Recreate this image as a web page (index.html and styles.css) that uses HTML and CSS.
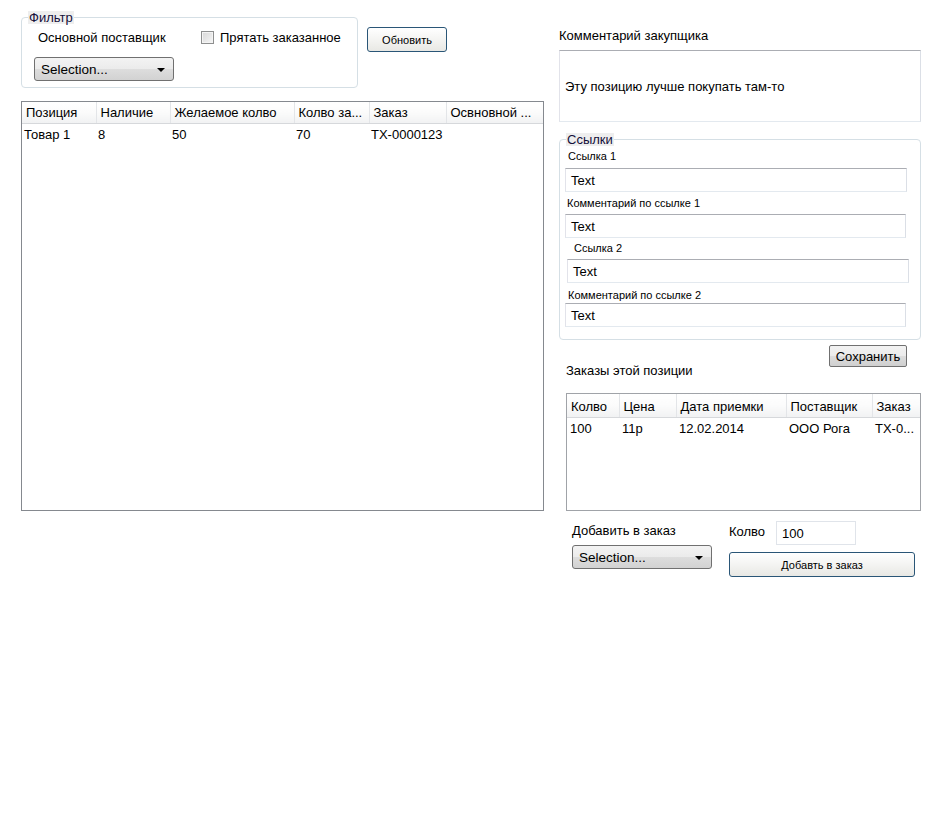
FILE: index.html
```html
<!DOCTYPE html>
<html lang="ru">
<head>
<meta charset="utf-8">
<title>Позиции</title>
<link rel="stylesheet" href="styles.css">
</head>
<body>
<div class="page">
  <div class="left">
    <div class="filter-row">
      <fieldset class="group filter">
        <legend class="group-title">Фильтр</legend>
        <div class="filter-body">
          <div class="filter-line">
            <span class="filter-label">Основной поставщик</span>
            <span class="checkbox"></span>
            <span>Прятать заказанное</span>
          </div>
          <div class="combo filter-combo"><span>Selection...</span><span class="caret"></span></div>
        </div>
      </fieldset>
      <button class="btn-blue refresh">Обновить</button>
    </div>

    <div class="grid main-grid">
      <table>
        <colgroup>
          <col class="c74"><col class="c74"><col class="c124"><col class="c75"><col class="c77"><col>
        </colgroup>
        <thead>
          <tr><th>Позиция</th><th>Наличие</th><th>Желаемое колво</th><th>Колво за...</th><th>Заказ</th><th>Освновной ...</th></tr>
        </thead>
        <tbody>
          <tr><td>Товар 1</td><td>8</td><td>50</td><td>70</td><td>TX-0000123</td><td></td></tr>
        </tbody>
      </table>
    </div>
  </div>

  <div class="right">
    <div class="caption top-caption">Комментарий закупщика</div>
    <div class="memo">Эту позицию лучше покупать там-то</div>

    <fieldset class="group links">
      <legend class="group-title">Ссылки</legend>
      <div class="links-body">
        <div class="small-label">Ссылка 1</div>
        <div class="field f1">Text</div>
        <div class="small-label l2">Комментарий по ссылке 1</div>
        <div class="field f2">Text</div>
        <div class="small-label l3">Ссылка 2</div>
        <div class="field f3">Text</div>
        <div class="small-label l4">Комментарий по ссылке 2</div>
        <div class="field f4">Text</div>
      </div>
    </fieldset>

    <div class="save-row"><button class="btn-gray">Сохранить</button></div>
    <div class="caption orders-caption">Заказы этой позиции</div>

    <div class="grid orders-grid">
      <table>
        <colgroup>
          <col class="c52"><col class="c57"><col class="c110"><col class="c86"><col>
        </colgroup>
        <thead>
          <tr><th>Колво</th><th>Цена</th><th>Дата приемки</th><th>Поставщик</th><th>Заказ</th></tr>
        </thead>
        <tbody>
          <tr><td>100</td><td>11р</td><td>12.02.2014</td><td>ООО Рога</td><td>TX-0...</td></tr>
        </tbody>
      </table>
    </div>

    <div class="add-row">
      <div class="add-left">
        <div class="caption">Добавить в заказ</div>
        <div class="combo add-combo"><span>Selection...</span><span class="caret"></span></div>
      </div>
      <div class="add-right">
        <div class="qty-line">
          <span class="qty-label">Колво</span>
          <div class="field qty">100</div>
        </div>
        <button class="btn-blue add-btn">Добавть в заказ</button>
      </div>
    </div>
  </div>
</div>
</body>
</html>
```

FILE: styles.css
```css
* { box-sizing: border-box; }

body {
  margin: 0;
  background: #ffffff;
  font-family: "Liberation Sans", Arial, sans-serif;
  font-size: 13px;
  color: #000;
}

.page {
  display: flex;
  align-items: flex-start;
  gap: 15px;
  padding-left: 21px;
}

/* ---------- left column ---------- */
.left { width: 523px; }

.filter-row {
  display: flex;
  align-items: flex-start;
  margin-top: 11px;
}

.group {
  margin: 0;
  padding: 0;
  border: 1px solid #d5dfe5;
  border-radius: 4px;
  min-width: 0;
}

.group-title {
  margin-left: 6px;
  padding: 0 1px;
  background: #eeeeee;
  font-size: 13px;
  line-height: 13px;
  height: 13px;
  color: #14103a;
}

.filter { width: 337px; }

.filter-body { padding: 5px 0 6px 12px; }

.filter-line {
  display: flex;
  align-items: center;
  height: 16px;
}

.filter-label {
  width: 163px;
  margin-left: 4px;
}

.checkbox {
  width: 13px;
  height: 13px;
  margin-right: 6px;
  border: 1px solid #8e8f8f;
  background: linear-gradient(135deg, #d7d7d7, #f6f6f6);
  box-shadow: inset 0 0 0 1px #f4f4f4;
}

.combo {
  display: flex;
  align-items: center;
  justify-content: space-between;
  height: 24px;
  padding: 0 8px 0 6px;
  border: 1px solid #707070;
  border-radius: 3px;
  background: linear-gradient(#f3f3f3, #ebebeb 50%, #dddddd 51%, #d2d2d2);
  font-size: 13.5px;
}

.filter-combo { width: 140px; margin-top: 12px; }

.caret {
  width: 0;
  height: 0;
  border-left: 4px solid transparent;
  border-right: 4px solid transparent;
  border-top: 4px solid #000;
  margin-top: 1px;
}

.btn-blue {
  font-family: "Liberation Sans", Arial, sans-serif;
  font-size: 11px;
  color: #000;
  border: 1px solid #2a5677;
  border-radius: 3px;
  background: linear-gradient(#ffffff, #f4f4f2 50%, #e8e8e4);
  padding: 0;
}

.refresh {
  width: 80px;
  height: 25px;
  margin: 16px 0 0 9px;
}

.grid {
  border: 1px solid #85898f;
  background: #fff;
  overflow: hidden;
}

.grid table {
  width: 100%;
  table-layout: fixed;
  border-collapse: collapse;
}

.grid th {
  height: 21px;
  padding: 0 4px;
  text-align: left;
  font-weight: normal;
  white-space: nowrap;
  overflow: hidden;
  background: linear-gradient(#ffffff, #fbfbfb 50%, #f1f2f3);
  border-right: 1px solid #e3e5e8;
  border-bottom: 1px solid #d6d8db;
}

.grid th:last-child { border-right: none; }

.grid td {
  height: 22px;
  padding: 0 2px;
  white-space: nowrap;
  overflow: hidden;
}

.main-grid {
  height: 410px;
  margin-top: 13px;
}

.c74 { width: 74px; }
.c124 { width: 124px; }
.c75 { width: 75px; }
.c77 { width: 77px; }
.c52 { width: 52px; }
.c57 { width: 57px; }
.c110 { width: 110px; }
.c86 { width: 86px; }

/* ---------- right column ---------- */
.right {
  width: 362px;
  margin-top: 27px;
}

.caption { line-height: 16px; height: 16px; }

.top-caption { margin-top: 1px; height: 15px; }

.memo {
  display: flex;
  align-items: center;
  height: 72px;
  margin-top: 7px;
  padding: 0 0 0 5px;
  border: 1px solid;
  border-color: #abadb3 #dbdfe6 #e3e9ef #e2e3ea;
}

.links { margin-top: 11px; }

.links-body { padding: 4px 0 12px 5px; }

.small-label {
  font-size: 11px;
  line-height: 13px;
  height: 13px;
  margin-left: 3px;
}

.field {
  display: flex;
  align-items: center;
  width: 342px;
  height: 24px;
  padding-left: 5px;
  border: 1px solid;
  border-color: #abadb3 #dbdfe6 #e3e9ef #e2e3ea;
  font-size: 13px;
}

.f1 { margin-top: 5px; }
.l2 { margin-top: 5px; margin-left: 2px; }
.f2 { margin-top: 4px; width: 341px; }
.l3 { margin-top: 4px; margin-left: 9px; }
.f3 { margin-top: 4px; margin-left: 2px; }
.l4 { margin-top: 6px; }
.f4 { margin-top: 1px; width: 341px; }

.save-row {
  display: flex;
  justify-content: flex-end;
  margin-top: 5px;
  padding-right: 14px;
}

.btn-gray {
  width: 78px;
  height: 22px;
  padding: 0;
  font-family: "Liberation Sans", Arial, sans-serif;
  font-size: 13px;
  color: #000;
  border: 1px solid #707070;
  border-radius: 2px;
  background: linear-gradient(#f2f2f2, #ebebeb 50%, #dddddd 51%, #cfcfcf);
}

.orders-caption {
  margin-top: -4px;
  margin-left: 7px;
}

.orders-grid {
  width: 355px;
  height: 118px;
  margin: 14px 0 0 7px;
  border-color: #a0a3a8;
}

.orders-grid th { height: 23px; padding-top: 2px; }

.orders-grid td { padding: 0 3px; }

.add-row {
  display: flex;
  margin: 10px 0 0 13px;
}

.add-left {
  width: 157px;
  padding-top: 2px;
}

.add-combo { width: 140px; margin-top: 6px; }

.qty-line {
  display: flex;
  align-items: center;
}

.qty-label { width: 47px; margin-top: -4px; }

.qty {
  width: 80px;
  border-color: #e0e4ea;
  padding-top: 1px;
}

.add-btn {
  display: block;
  width: 186px;
  height: 25px;
  margin-top: 7px;
}
```
